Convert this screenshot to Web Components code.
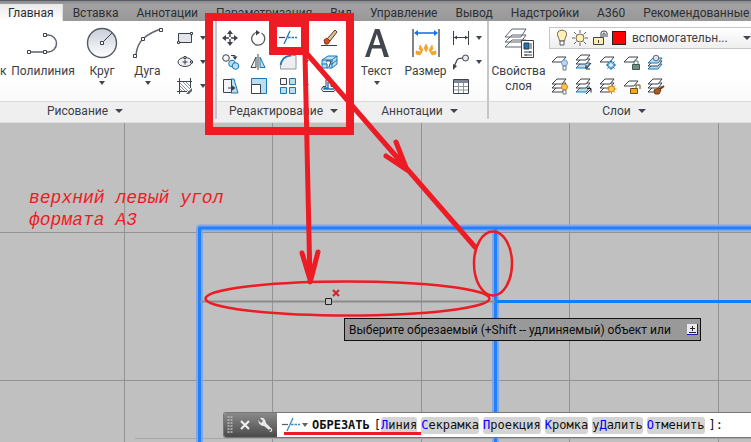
<!DOCTYPE html>
<html lang="ru">
<head>
<meta charset="utf-8">
<title>Чертёж</title>
<style>
html,body{margin:0;height:100%}
body{font:12px/16px Roboto,"Noto Sans",sans-serif;color:#3c3f46;overflow:hidden}
</style>
</head>
<body>
<cad-app></cad-app>
<script>
const S='#3d424a', B='#1976b8', L='#b9def2';
const sheet=(y,f='#fff',s=S)=>`<path d="M1 ${y+5}l5-5h9l-4 5z" fill="${f}" stroke="${s}"/>`;
const stack=`${sheet(9)}${sheet(5)}${sheet(1)}`;
const bulb=(c,x=10,y=5)=>`<circle cx="${x+2.5}" cy="${y+3}" r="3" fill="${c}" stroke="${c==='#ffc44c'?'#d98412':'#6f9cc8'}"/><path d="M${x+1} ${y+6}h3v4h-3z" fill="#fff" stroke="#6c7480"/>`;
const ICONS={
poly:[36,30,`<path d="M4 24h16h3a8.500 8.500 0 0 0 0-17h-3" fill="none" stroke="#5d646d" stroke-width="1.500"/><g fill="#fff" stroke="${S}"><path d="M2.500 22.500h3v3h-3zM18.500 22.500h3v3h-3zM18.500 5.500h3v3h-3z"/></g>`],
circle:[34,34,`<defs><linearGradient id="g" x2="0" y2="1"><stop stop-color="#c7ced8"/><stop offset="1" stop-color="#fff"/></linearGradient></defs><circle cx="17" cy="17" r="14.500" fill="url(#g)" stroke="#565c65" stroke-width="1.400"/><path d="M17 17L27 7" stroke="${S}"/><path d="M15.500 15.500h3v3h-3z" fill="#fff" stroke="${S}"/>`],
arc:[34,34,`<path d="M5 29Q6 18 13 12T30 3" fill="none" stroke="#5d646d" stroke-width="1.500"/><g fill="#fff" stroke="${S}"><path d="M2.500 28.500h3v3h-3zM10.500 11.500h3v3h-3zM28.500 2.500h3v3h-3z"/></g>`],
rect:[18,16,`<path d="M2.500 3.500h13v9h-13z" fill="#e2e5ec" stroke="${S}"/><path d="M1.500 11.500h2v2h-2zM14.500 2.500h2v2h-2z" fill="#fff" stroke="${S}"/>`],
ell:[18,16,`<ellipse cx="9" cy="8" rx="7" ry="4.500" fill="#eef0f4" stroke="${S}"/><path d="M9 5.500v5M6.500 8h5" stroke="${S}"/><path d="M8 2.500h2v2h-2zM14.500 7h2v2h-2z" fill="#fff" stroke="${S}"/>`],
hatch:[18,16,`<path d="M4 5l9 9M4 8l6 6M4 11l3 3M7 4l7 7M10 4l4 4" stroke="#8d939c"/><path d="M3.500 0v16M14.500 0v10M1 3.500h15M1 13.500h10" stroke="${S}"/><path d="M10 16l6-6v3l-3 3z" fill="#59606b"/>`],
move:[16,16,`<path d="M8 4v8M4 8h8" stroke="${S}" stroke-width="1.400"/><path d="M8 0l3 4H5zM8 16l3-4H5zM0 8l4-3v6zM16 8l-4-3v6z" fill="${S}"/><path d="M7 7h2v2H7z" fill="#fff"/>`],
rot:[16,16,`<path d="M6 2.500A6.500 6.500 0 1 0 11.500 3" fill="none" stroke="#555c66" stroke-width="1.300"/><path d="M6 0l4 2.500-4 3z" fill="${S}"/>`],
trim:[18,16,`<path d="M0 7.500h6" stroke="${S}" stroke-width="1.200"/><path d="M5 14L11 1" stroke="${B}" stroke-width="1.300"/><path d="M9 7.500h9" stroke="${B}" stroke-width="1.300" stroke-dasharray="2.500 1"/>`],
erase:[18,16,`<path d="M1 15.500h16" stroke="${S}"/><path d="M7 9L15 0l2 2-7 9z" fill="#e3c394" stroke="#4c3c2d"/><path d="M4 10l3-2 3 3-2 3H5z" fill="#d84e21" stroke="#81351e"/>`],
copy:[18,16,`<circle cx="4" cy="4" r="3.300" fill="#f3f4f6" stroke="${S}"/><g fill="${L}" stroke="${B}"><circle cx="10" cy="9.500" r="3.300"/><circle cx="13.500" cy="12" r="3.300"/></g><path d="M9 1.500h4v2" stroke="${S}" fill="none"/><path d="M10.500 2.500h5L13 6z" fill="${S}"/>`],
mirror:[16,16,`<path d="M1 13.500L6 3v10.500z" fill="#eef0f2" stroke="${S}"/><path d="M8 0v16" stroke="${S}"/><path d="M15 13.500L10 3v10.500z" fill="${L}" stroke="${B}"/>`],
fillet:[18,16,`<path d="M1.500 15V12Q3 2 14 1.500H17V15z" fill="#eceef2" stroke="#9298a2"/><path d="M1.500 11Q3 2 12 1.500" fill="none" stroke="${B}" stroke-width="1.600"/>`],
box:[18,16,`<path d="M2 6l6-4h9v8l-5 4H2z" fill="${L}" stroke="${B}"/><path d="M2 6h10v8M12 6l5-4M7 6v8M2 10h10l5-4" fill="none" stroke="${B}"/><path d="M6 7h5l-2 6" fill="#fff" stroke="${S}"/>`],
stretch:[18,16,`<path d="M9 1l3 0 4 14H9z" fill="${L}" stroke="${B}"/><path d="M1.500 1.500h8v13h-8z" fill="#f3f4f6" stroke="${S}"/><path d="M6 10h5" stroke="${S}"/><path d="M9.500 7l4 3-4 3z" fill="${S}"/>`],
scale:[18,16,`<path d="M1.500.500h15v15h-15z" fill="${L}" stroke="${B}"/><path d="M1.500 6.500h9v9h-9z" fill="#fff" stroke="${S}"/>`],
array:[18,16,`<path d="M1.500.500h6v6h-6z" fill="#f3f4f6" stroke="${S}"/><path d="M10.500.500h6v6h-6zM1.500 9.500h6v6h-6zM10.500 9.500h6v6h-6z" fill="${L}" stroke="${B}"/>`],
offset:[18,16,`<path d="M6 1.500h5v7h3q3 3 0 5H3q-3-2 0-5h3z" fill="#fff" stroke="${S}"/><path d="M8 4v6H4v1h10" fill="none" stroke="${B}" stroke-width="1.400"/>`],
text:[30,34,`<path fill-rule="evenodd" d="M3 31L13 3h4.500L27 31h-5l-2.500-8.500h-9.500L7.500 31zM11.200 19h7.100l-3.500-11z" fill="#42474f"/>`],
dim:[34,34,`<path d="M4 3v28M30 3v28" stroke="${S}" stroke-width="1.300"/><path d="M6 7h22" stroke="#1673f0" stroke-width="1.600"/><path d="M5 7l4-3v6zM29 7l-4-3v6z" fill="#1673f0"/><g fill="#f5a91c" stroke="#e8891b" stroke-width=".5"><path d="M17 18l2 4-2 4-2-4zM11 19l3 5-1 2-3-3zM23 19l-3 5 1 2 3-3zM7 25l6 1-2 3-4-1zM27 25l-6 1 2 3 4-1z"/></g>`],
lin:[18,16,`<path d="M1.500 1v14M16.500 1v14M2 7.500h14" stroke="${S}"/><path d="M2 7.500l3-2v4zM16 7.500l-3-2v4z" fill="${S}"/>`],
lead:[18,16,`<path d="M2 13L5 6q1-2 6-2" fill="none" stroke="${S}" stroke-width="1.200"/><path d="M1 16V10l4 2z" fill="${S}"/><circle cx="13.500" cy="4" r="3" fill="#e7eaef" stroke="${S}"/>`],
table:[18,17,`<path d="M1.500 1.500h15v14h-15z" fill="#fff" stroke="${S}"/><path d="M2 2h14v3H2z" fill="#7f8894"/><path d="M2 8.500h14M2 12h14M6.500 5v10M11.500 5v10" stroke="#8d949e"/>`],
layers:[34,34,`<g stroke="#5d646d" fill="#fff"><path d="M3 21l7-7h14l-5 7zM3 16l7-7h14l-5 7zM3 11l7-8h14l-5 8z"/></g><path d="M19.500 14.500h12v17h-12z" fill="#fff" stroke="${S}"/><path d="M22 17h5v6h-5z" fill="${B}" stroke="#23384d"/><path d="M29 17v6M22 26h8M22 29h8M28 25v2M24 28v2" stroke="${S}"/>`],
ybulb:[12,18,`<path d="M3.500 12Q3 9 1.800 7Q0 2 6 1Q12 2 10.200 7Q9 9 8.500 12z" fill="#fff0b5" stroke="#756c58"/><path d="M4 12h4v4H4z" fill="#fff" stroke="#545a63"/>`],
sun:[16,16,`<path d="M8 0v3M8 13v3M0 8h3M13 8h3M2 2l2.500 2.500M11.500 11.500L14 14M14 2l-2.500 2.500M2 14l2.500-2.500" stroke="#606570"/><circle cx="8" cy="8" r="4" fill="#fff0b5" stroke="#756c58"/>`],
lock:[16,16,`<path d="M1.500 7.500h10v7h-10z" fill="#ffedaf" stroke="${S}"/><path d="M9 7V3q0-2 3-2t3 2v4M11 7V4q0-1 1-1t1 1v3M6.500 10v3" fill="none" stroke="${S}"/>`],
l1:[18,17,`${sheet(3)}${bulb('#b9d9f3',11,6)}`],
l2:[18,17,`${sheet(9,L,B)}${sheet(5)}${sheet(1)}<path d="M16 9l-4 5M11 11v4h4" stroke="#222" fill="none"/>`],
l3:[18,17,`${sheet(3)}<g stroke="${B}"><circle cx="12" cy="11" r="3.500" fill="#dcecf8"/><path d="M12 6v10M7 11h10M8.500 7.500l7 7M15.500 7.500l-7 7"/></g><circle cx="12" cy="11" r="2" fill="#dcecf8"/>`],
l4:[18,17,`${sheet(3)}<path d="M9.500 10.500h7v5h-7z" fill="#708e86" stroke="#3b5b50"/><path d="M11 10V7h4v3" fill="none" stroke="#5b756c"/>`],
l5:[18,17,`${sheet(10,L,B)}${sheet(7,'#fff')}${sheet(4,L,B)}<circle cx="9" cy="4" r="2.800" fill="#dbe4ed" stroke="#626973"/>`],
l6:[18,17,`${stack}${bulb('#ffc44c',11,6)}`],
l7:[18,17,`${sheet(9,L,B)}${sheet(5)}${sheet(1)}<path d="M11 16l5-5M12 10.500h4v4" stroke="#222" fill="none"/>`],
l8:[18,17,`${stack}<path d="M12.500 6v10M7.500 11h10M9 7.500l7 7M16 7.500l-7 7" stroke="#e78916"/><circle cx="12.500" cy="11" r="3" fill="#ffd24d" stroke="#d67812"/>`],
l9:[18,17,`${sheet(3)}<path d="M7.500 10.500h7v5h-7z" fill="#efa921" stroke="#6f4f15"/><path d="M13 10V7h4v4" fill="none" stroke="#6f4f15"/>`],
l10:[18,17,`${stack}<path d="M7 12l5-2 2 2-2 4-4 0z" fill="#ad5b18" stroke="#713b10"/><path d="M13 11l4-3" stroke="#713b10" stroke-width="2"/>`],
caret:[8,6,`<path d="M0 1h8L4 5z" fill="#42474f"/>`],
mini:[6,4,`<path d="M0 0h6L3 4z" fill="#42474f"/>`],
close:[12,12,`<path d="M2 2l8 8M10 2l-8 8" stroke="#eee" stroke-width="2.200"/>`],
wrench:[16,16,`<path d="M1 3l3 3 2-2-3-3q5-1 6 5l6 6q1 2-1 3-2 0-2-2L7 9Q2 9 1 3z" fill="#e9e9e9"/><circle cx="13" cy="13" r="1" fill="#555"/>`],
grip:[6,18,`<path d="M1.500 0v18M4.500 0v18" stroke="#aaa" stroke-width="2" stroke-dasharray="2 1"/>`],
enter:[11,11,`<path d="M0 0h10v10H0z" fill="#e9e9ee"/><path d="M10.500 0v10.500H0" fill="none" stroke="#1717b5"/><path d="M5.500 2v5M3 4.500h5M2 8.500h7" stroke="#222"/>`]
};
function define(name,render){
  customElements.define(name,class extends HTMLElement{
    connectedCallback(){
      if(this.shadowRoot)return;
      const t=document.createElement('template');
      t.innerHTML=render(this);
      this.attachShadow({mode:'open'}).append(t.content.cloneNode(true));
    }
  });
}
const BTN='button{all:unset;box-sizing:border-box;cursor:pointer}button:focus-visible{outline:1px solid #1976b8}';

define('cad-icon',e=>{const [w,h,d]=ICONS[e.getAttribute('name')];
 return `<style>:host{display:inline-flex;flex:none}svg{display:block}</style><svg width="${w}" height="${h}" viewBox="0 0 ${w} ${h}" aria-hidden="true">${d}</svg>`});

define('ribbon-tab',e=>`<style>${BTN}:host{display:block;flex:none}button{height:100%;padding:0 9px;display:flex;align-items:center;color:#2d2f33;white-space:nowrap}
:host([active]) button{background:linear-gradient(#e9e9e9,#fff);border-right:1px solid #ddd;padding:0 8px}</style><button role="tab"><slot></slot></button>`);

define('ribbon-tabs',()=>`<style>:host{display:flex;height:21px;overflow:hidden;background:linear-gradient(#8c8c8c,#a2a2a2 4px,#989898);border-top:1px solid #565a66;box-sizing:border-box;padding-top:3px}
::slotted([active]){margin-right:1px}</style><slot></slot>`);

define('tool-large',e=>`<style>${BTN}:host{display:block;flex:none;width:var(--w,48px)}button{display:flex;flex-direction:column;align-items:center;width:100%;text-align:center}
cad-icon{height:34px;align-items:center;margin-bottom:4px}span{line-height:15px;white-space:nowrap}.m{height:6px;align-items:flex-end;margin:0}</style>
<button><cad-icon name="${e.getAttribute('icon')}"></cad-icon><span><slot></slot></span>${e.hasAttribute('menu')?'<cad-icon class="m" name="mini"></cad-icon>':''}</button>`);

define('tool-small',e=>`<style>${BTN}:host{display:flex;align-items:center;justify-content:center}button{display:flex;align-items:center;gap:6px}</style>
<button aria-label="${e.getAttribute('label')}"><cad-icon name="${e.getAttribute('icon')}"></cad-icon>${e.hasAttribute('menu')?'<cad-icon name="mini"></cad-icon>':''}</button>`);

define('ribbon-panel',e=>`<style>${BTN}:host{display:flex;flex-direction:column;flex:none;box-sizing:border-box;border-right:2px solid #c4c6c9;overflow:hidden}
:host([last]){flex:1 0 0;border:0}
.b{display:flex;height:80px;background:linear-gradient(#fff 55px,#fafafa);padding:5px 0 0;box-sizing:border-box}
footer{height:18px;background:#efefef;border-top:1px solid #dadada;box-sizing:border-box;display:flex;justify-content:center;padding:0 var(--fr,0) 0 var(--fl,0)}
footer button{display:flex;gap:7px;align-items:center;white-space:nowrap}</style>
<div class="b"><slot></slot></div><footer><button>${e.getAttribute('label')}<cad-icon name="caret"></cad-icon></button></footer>`);

define('tool-grid',e=>`<style>:host{display:grid;grid-template-columns:${e.getAttribute('cols')};grid-auto-rows:24px;align-content:start;justify-items:start;flex:none}</style><slot></slot>`);

define('layer-select',()=>`<style>:host{display:flex;align-items:center;gap:4px;height:22px;box-sizing:border-box;padding:0 0 0 6px;border:1px solid #c4c6c9;border-right:0;background:linear-gradient(#fff,#eee)}
i{width:12px;height:12px;border:1px solid #222;background:#f00;flex:none}select{appearance:none;border:0;background:none;font:inherit;color:inherit;padding:0 0 0 2px;flex:1;min-width:0;outline-offset:1px}</style>
<cad-icon name="ybulb"></cad-icon><cad-icon name="sun"></cad-icon><cad-icon name="lock"></cad-icon><i></i>
<select aria-label="Слой"><option>вспомогательн...</option></select><cad-icon name="caret"></cad-icon>`);

define('layer-tools',()=>`<style>:host{display:flex;flex-direction:column;flex:1;min-width:0;padding-top:1px}tool-grid{margin:1px 0 0 2px}</style>
<layer-select></layer-select><tool-grid cols="repeat(5,24px)">${Array.from({length:10},(_,i)=>`<tool-small icon="l${i+1}" label="Инструмент слоя ${i+1}"></tool-small>`).join('')}</tool-grid>`);

const small=a=>a.map(([i,l,m])=>`<tool-small icon="${i}" label="${l}"${m?' menu':''}></tool-small>`).join('');
define('cad-ribbon',()=>`<style>:host{display:flex;height:102px;background:#efefef;box-sizing:border-box;border-bottom:1px solid #ddd;align-items:flex-start;overflow:hidden}
.cut{width:5px;padding-top:38px;line-height:15px;flex:none}
.draw{width:217px;--fr:45px}.draw tool-grid{margin-left:4px}.edit{width:135px}.edit tool-grid{margin-left:5px}.ann{width:137px}.ann tool-grid{margin-left:2px}.last{--fl:8px}.last layer-tools{margin-left:1px}</style>
<ribbon-panel class="draw" label="Рисование"><span class="cut">к</span>
<tool-large icon="poly" style="--w:76px">Полилиния</tool-large><tool-large icon="circle" menu style="--w:42px">Круг</tool-large><tool-large icon="arc" menu style="--w:49px">Дуга</tool-large>
<tool-grid cols="38px">${small([['rect','Прямоугольник',1],['ell','Эллипс',1],['hatch','Штриховка',1]])}</tool-grid></ribbon-panel>
<ribbon-panel class="edit" label="Редактирование"><tool-grid cols="28px 29px 41px 29px">${small([['move','Перенести'],['rot','Повернуть'],['trim','Обрезать',1],['erase','Стереть'],['copy','Копировать'],['mirror','Зеркало'],['fillet','Сопряжение',1],['box','Расчленить'],['stretch','Растянуть'],['scale','Масштаб'],['array','Массив',1],['offset','Подобие']])}</tool-grid></ribbon-panel>
<ribbon-panel class="ann" label="Аннотации"><tool-large icon="text" menu style="--w:49px">Текст</tool-large><tool-large icon="dim" style="--w:49px">Размер</tool-large>
<tool-grid cols="36px">${small([['lin','Линейный',1],['lead','Выноска',1],['table','Таблица']])}</tool-grid></ribbon-panel>
<ribbon-panel class="last" last label="Слои"><tool-large icon="layers" style="--w:59px">Свойства<br>слоя</tool-large><layer-tools></layer-tools></ribbon-panel>`);

define('cursor-prompt',()=>`<style>${BTN}:host{display:flex;align-items:center;box-sizing:border-box;border:1px solid #111;background:#999;color:#0a0a0a;height:23px;padding:0 3px 0 4px;white-space:nowrap;gap:16px;justify-content:space-between}button{display:flex}</style><span><slot></slot></span><button aria-label="Параметры"><cad-icon name="enter"></cad-icon></button>`);

define('command-option',()=>`<style>${BTN}:host{display:block;flex:none}button{background:#d4d4d4;border-radius:3px;height:17px;line-height:17px;display:block;color:#111}::slotted(b){font-weight:400;color:#00f}</style><button><slot></slot></button>`);

define('command-line',()=>`<style>${BTN}:host{display:flex;height:26px;box-sizing:border-box;border:1px solid #777;border-right:0;border-radius:3px 0 0 3px;background:#fff;font:12px/16px "DejaVu Sans Mono",monospace;color:#111;overflow:hidden}
.h{display:flex;align-items:center;gap:6px;padding:0 4px 0 3px;background:linear-gradient(#8a8a8a,#4a4a4a);flex:none}.h button,.t{display:flex;align-items:center}
.t{gap:2px;margin:0 4px 0 5px;opacity:.85}.o{display:flex;align-items:center;gap:4px;flex:1;min-width:0}.o span{margin-right:-4px}
input{border:0;outline:0;background:none;font:inherit;flex:1;min-width:0;width:0;padding:0}</style>
<div class="h"><cad-icon name="grip"></cad-icon><button aria-label="Закрыть"><cad-icon name="close"></cad-icon></button><button aria-label="Настройка"><cad-icon name="wrench"></cad-icon></button></div>
<button class="t" aria-label="Последние команды"><cad-icon name="trim"></cad-icon><cad-icon name="mini"></cad-icon></button>
<div class="o"><strong>ОБРЕЗАТЬ</strong><span>[</span><command-option><b>Л</b>иния</command-option><command-option><b>С</b>екрамка</command-option><command-option><b>П</b>роекция</command-option><command-option><b>К</b>ромка</command-option><command-option>у<b>Д</b>алить</command-option><command-option><b>О</b>тменить</command-option><span>]:</span><input aria-label="Команда"></div>`);

define('drawing-canvas',()=>`<style>:host{display:block;position:relative;flex:1;min-height:0;overflow:hidden;background:#c0c0c0}
svg{position:absolute;inset:0;width:100%;height:100%}
p{position:absolute;left:29px;top:64px;margin:0;font:italic 18px/22px "Liberation Mono",monospace;color:#ed1c24;white-space:nowrap}
cursor-prompt{position:absolute;left:344px;top:195px;width:357px}command-line{position:absolute;left:223px;right:0;bottom:4px}</style>
<svg aria-hidden="true"><path d="M124.500 0v319M272.500 0v319M421.500 0v319M569.500 0v319M718.500 0v319M0 109.500h2000M0 257.500h2000" stroke="#929297"/><path d="M135 315.500h2000" stroke="#a7a7a7"/>
<g fill="none"><path d="M199.500 400V105H2000M495.500 105V400" stroke="#86a5e6" stroke-width="7" stroke-linejoin="round"/><path d="M199.500 400V105H2000M495.500 105V400" stroke="#1e82ff" stroke-width="3" stroke-linejoin="round"/>
<path d="M200 178.500H495" stroke="#8b8b8b" stroke-width="2"/><path d="M497 178.500H2000" stroke="#0a80ff" stroke-width="3"/></g>
<path d="M325.500 175.500h6v6h-6z" fill="#c0c0c0" stroke="#222"/><path d="M333 167l6 6M339 167l-6 6" stroke="#d2232a" stroke-width="2"/></svg>
<p>верхний левый угол<br>формата А3</p>
<cursor-prompt>Выберите обрезаемый (+Shift -- удлиняемый) объект или</cursor-prompt><command-line></command-line>`);

define('markup-layer',()=>`<style>:host{position:absolute;inset:0;pointer-events:none}svg{display:block;width:100%;height:100%}</style>
<svg aria-hidden="true" fill="none" stroke="#ed1c24"><path d="M209 17h141v114H209zM273 23h32v28h-32z" stroke-width="8"/>
<path d="M305 54L310 282M308 55L475 247M302 253L310.500 281L318 252M386 156L407 170L396 142" stroke-width="5" stroke-linecap="round" stroke-linejoin="round"/><path d="M305 265l5.500 16 5-16zM397 162l10 8-6-14z" fill="#ed1c24"/>
<ellipse cx="347.500" cy="298.500" rx="142" ry="17" stroke-width="2.500"/><ellipse cx="493" cy="263.500" rx="19" ry="32" stroke-width="2.500"/><path d="M284 433.500h137" stroke-width="3"/></svg>`);

define('cad-app',()=>`<style>:host{display:flex;flex-direction:column;height:100vh;position:relative;overflow:hidden}</style>
<ribbon-tabs role="tablist">${['Главная','Вставка','Аннотации','Параметризация','Вид','Управление','Вывод','Надстройки','A360','Рекомендованные п'].map((t,i)=>`<ribbon-tab${i?'':' active'}>${t}</ribbon-tab>`).join('')}</ribbon-tabs>
<cad-ribbon></cad-ribbon><drawing-canvas></drawing-canvas><markup-layer></markup-layer>`);
</script>
</body>
</html>
